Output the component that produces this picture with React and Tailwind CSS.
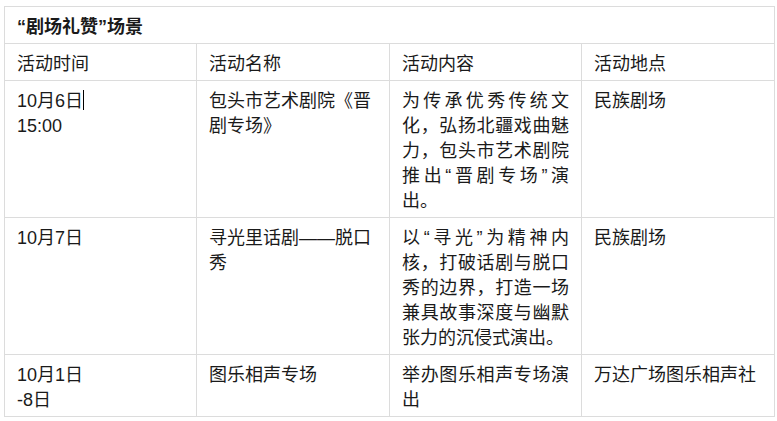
function Justified({ lines }) {
  return (
    <>
      {lines.map((line, i) =>
        i < lines.length - 1 ? (
          <div key={i} className="flex justify-between">
            {Array.from(line).map((ch, j) => (
              <span key={j}>{ch}</span>
            ))}
          </div>
        ) : (
          <div key={i}>{line}</div>
        )
      )}
    </>
  );
}

export default function App() {
  const cell = "border border-[#dcdcdc] px-3 pt-[8px] pb-[3px] align-top text-left";
  const rows = [
    {
      time: (
        <>
          10月6日<span className="inline-block w-px h-[20px] bg-black align-[-3px]" />
          <br />
          15:00
        </>
      ),
      name: "包头市艺术剧院《晋剧专场》",
      content: ["为传承优秀传统文", "化，弘扬北疆戏曲魅", "力，包头市艺术剧院", "推出“晋剧专场”演", "出。"],
      place: "民族剧场",
    },
    {
      time: "10月7日",
      name: "寻光里话剧——脱口秀",
      content: ["以“寻光”为精神内", "核，打破话剧与脱口", "秀的边界，打造一场", "兼具故事深度与幽默", "张力的沉侵式演出。"],
      place: "民族剧场",
    },
    {
      time: (
        <>
          10月1日
          <br />
          -8日
        </>
      ),
      name: "图乐相声专场",
      content: ["举办图乐相声专场演", "出"],
      place: "万达广场图乐相声社",
    },
  ];

  return (
    <div
      lang="zh-CN"
      className="min-h-screen bg-white pt-[6px] pl-[4px] text-[#1a1a1a]"
      style={{ fontFamily: '"Liberation Sans", "Noto Sans CJK SC", sans-serif' }}
    >
      <table className="table-fixed border-collapse w-[770px] text-[18px] leading-[25px]">
        <colgroup>
          <col className="w-[192px]" />
          <col className="w-[193px]" />
          <col className="w-[192px]" />
          <col className="w-[193px]" />
        </colgroup>
        <thead>
          <tr>
            <th colSpan={4} className={cell + " font-bold"}>
              “剧场礼赞”场景
            </th>
          </tr>
          <tr>
            <th className={cell + " font-normal"}>活动时间</th>
            <th className={cell + " font-normal"}>活动名称</th>
            <th className={cell + " font-normal"}>活动内容</th>
            <th className={cell + " font-normal"}>活动地点</th>
          </tr>
        </thead>
        <tbody>
          {rows.map((r, i) => (
            <tr key={i}>
              <td className={cell}>{r.time}</td>
              <td className={cell}>{r.name}</td>
              <td className={cell}>
                <Justified lines={r.content} />
              </td>
              <td className={cell}>{r.place}</td>
            </tr>
          ))}
        </tbody>
      </table>
    </div>
  );
}
